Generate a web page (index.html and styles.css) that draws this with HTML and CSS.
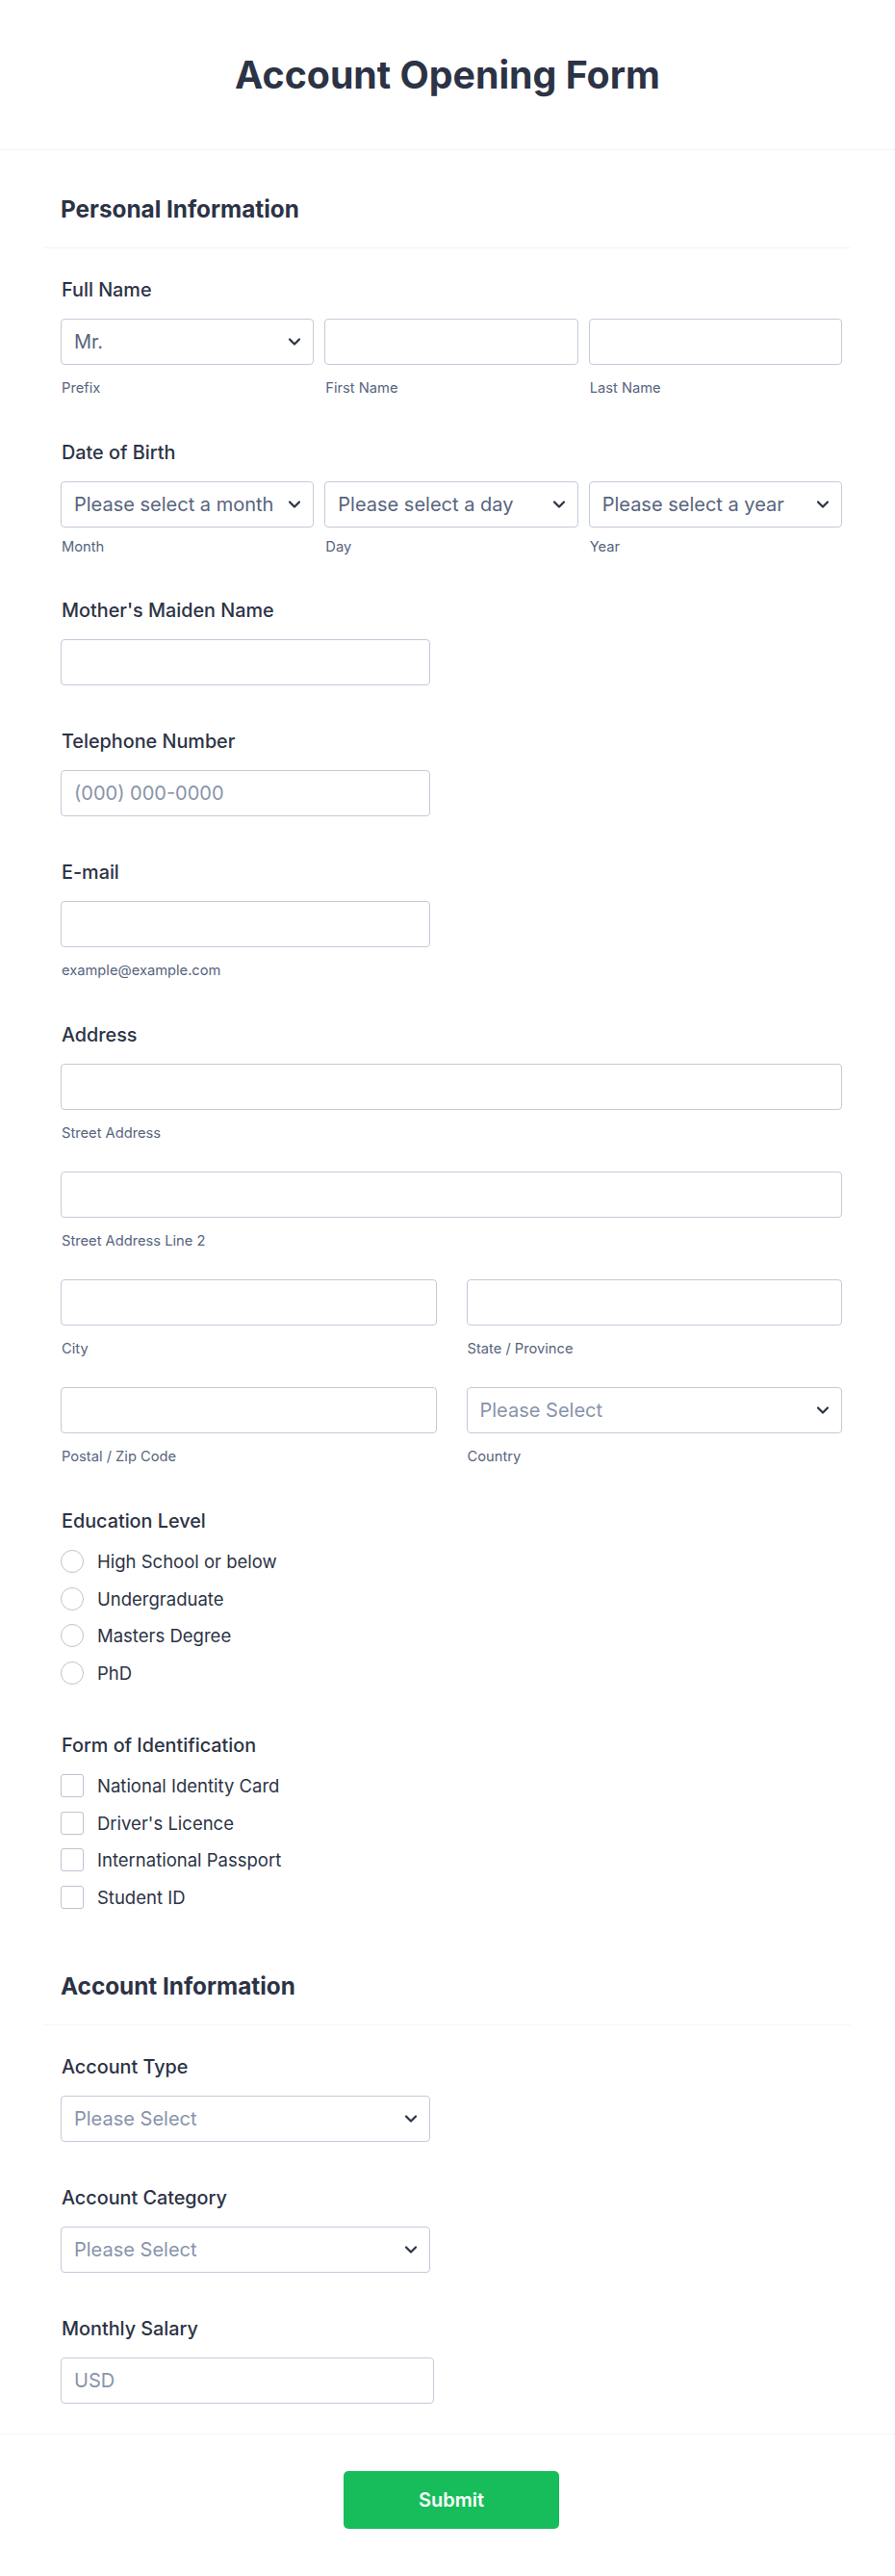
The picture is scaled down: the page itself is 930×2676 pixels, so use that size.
FILE: index.html
```html
<!DOCTYPE html>
<html lang="en">
<head>
<meta charset="utf-8">
<title>Account Opening Form</title>
<link rel="stylesheet" href="styles.css">
</head>
<body>
<header class="header">
  <h1 class="title">Account Opening Form</h1>
</header>

<section class="section">
  <div class="section-head"><h2 class="section-title">Personal Information</h2></div>
  <div class="list">
    <div class="field">
      <div class="label">Full Name</div>
      <div class="cols3">
        <div class="col">
          <div class="box select"><span class="val">Mr.</span><svg class="chev" viewBox="0 0 12 8"><path d="M1 1.5 L6 6.5 L11 1.5"/></svg></div>
          <div class="sub">Prefix</div>
        </div>
        <div class="col">
          <div class="box"></div>
          <div class="sub">First Name</div>
        </div>
        <div class="col">
          <div class="box"></div>
          <div class="sub">Last Name</div>
        </div>
      </div>
    </div>

    <div class="field field-dob">
      <div class="label">Date of Birth</div>
      <div class="cols3">
        <div class="col">
          <div class="box select"><span class="val">Please select a month</span><svg class="chev" viewBox="0 0 12 8"><path d="M1 1.5 L6 6.5 L11 1.5"/></svg></div>
          <div class="sub">Month</div>
        </div>
        <div class="col">
          <div class="box select"><span class="val">Please select a day</span><svg class="chev" viewBox="0 0 12 8"><path d="M1 1.5 L6 6.5 L11 1.5"/></svg></div>
          <div class="sub">Day</div>
        </div>
        <div class="col">
          <div class="box select"><span class="val">Please select a year</span><svg class="chev" viewBox="0 0 12 8"><path d="M1 1.5 L6 6.5 L11 1.5"/></svg></div>
          <div class="sub">Year</div>
        </div>
      </div>
    </div>

    <div class="field">
      <div class="label">Mother's Maiden Name</div>
      <div class="box short"></div>
    </div>

    <div class="field">
      <div class="label">Telephone Number</div>
      <div class="box short"><span class="ph">(000) 000-0000</span></div>
    </div>

    <div class="field">
      <div class="label">E-mail</div>
      <div class="box short"></div>
      <div class="sub">example@example.com</div>
    </div>

    <div class="field">
      <div class="label">Address</div>
      <div class="addr">
        <div class="row1">
          <div class="box"></div>
          <div class="sub">Street Address</div>
        </div>
        <div class="row1">
          <div class="box"></div>
          <div class="sub">Street Address Line 2</div>
        </div>
        <div class="cols2">
          <div class="col">
            <div class="box"></div>
            <div class="sub">City</div>
          </div>
          <div class="col">
            <div class="box"></div>
            <div class="sub">State / Province</div>
          </div>
        </div>
        <div class="cols2">
          <div class="col">
            <div class="box"></div>
            <div class="sub">Postal / Zip Code</div>
          </div>
          <div class="col">
            <div class="box select"><span class="ph">Please Select</span><svg class="chev" viewBox="0 0 12 8"><path d="M1 1.5 L6 6.5 L11 1.5"/></svg></div>
            <div class="sub">Country</div>
          </div>
        </div>
      </div>
    </div>

    <div class="field field-opts">
      <div class="label label-opt">Education Level</div>
      <div class="options">
        <div class="opt"><span class="radio"></span><span class="opt-text">High School or below</span></div>
        <div class="opt"><span class="radio"></span><span class="opt-text">Undergraduate</span></div>
        <div class="opt"><span class="radio"></span><span class="opt-text">Masters Degree</span></div>
        <div class="opt"><span class="radio"></span><span class="opt-text">PhD</span></div>
      </div>
    </div>

    <div class="field field-opts">
      <div class="label label-opt">Form of Identification</div>
      <div class="options">
        <div class="opt"><span class="check"></span><span class="opt-text">National Identity Card</span></div>
        <div class="opt"><span class="check"></span><span class="opt-text">Driver's Licence</span></div>
        <div class="opt"><span class="check"></span><span class="opt-text">International Passport</span></div>
        <div class="opt"><span class="check"></span><span class="opt-text">Student ID</span></div>
      </div>
    </div>
  </div>
</section>

<section class="section">
  <div class="section-head section-head-next"><h2 class="section-title">Account Information</h2></div>
  <div class="list">
    <div class="field">
      <div class="label">Account Type</div>
      <div class="box select short"><span class="ph">Please Select</span><svg class="chev" viewBox="0 0 12 8"><path d="M1 1.5 L6 6.5 L11 1.5"/></svg></div>
    </div>
    <div class="field">
      <div class="label">Account Category</div>
      <div class="box select short"><span class="ph">Please Select</span><svg class="chev" viewBox="0 0 12 8"><path d="M1 1.5 L6 6.5 L11 1.5"/></svg></div>
    </div>
    <div class="field">
      <div class="label">Monthly Salary</div>
      <div class="box salary"><span class="ph">USD</span></div>
    </div>
  </div>
</section>

<footer class="footer">
  <button class="submit" type="button">Submit</button>
</footer>
</body>
</html>
```

FILE: styles.css
```css
* { box-sizing: border-box; }

body {
  margin: 0;
  background: #ffffff;
  color: #2c3345;
  font-family: Inter, "Noto Sans", "Liberation Sans", sans-serif;
}

.header {
  height: 156px;
  border-bottom: 1px solid #f3f3fe;
  display: flex;
  align-items: center;
  justify-content: center;
}

.title {
  margin: 0;
  font-size: 39.3px;
  line-height: 48px;
  font-weight: 700;
  color: #2c3345;
}

.section {
  margin: 0 46px 0 45px;
}

.section-head {
  padding: 46px 18px 25px;
  border-bottom: 1px solid #f3f3fe;
}

.section-head-next {
  padding-top: 29px;
}

.section-title {
  margin: 0;
  font-size: 24.3px;
  line-height: 30px;
  font-weight: 700;
  color: #2c3345;
}

.list {
  padding: 8px 0;
}

.field {
  padding: 23px 9px 23px 18px;
}

.field-dob {
  padding-bottom: 22px;
}

.field-dob .sub {
  margin-top: 11px;
}

.field-opts {
  padding-bottom: 21px;
}

.label {
  padding-left: 1px;
  font-size: 19.8px;
  line-height: 24px;
  font-weight: 500;
  color: #2c3345;
  margin-bottom: 18px;
}

.label-opt {
  margin-bottom: 11px;
}

.box {
  height: 48px;
  border: 1px solid #c3cad8;
  border-radius: 4px;
  background: #fff;
  display: flex;
  align-items: center;
  padding: 0 13px;
  font-size: 20px;
  color: #57647e;
}

.select {
  justify-content: space-between;
}

.short {
  width: 384px;
}

.salary {
  width: 388px;
}

.val {
  color: #57647e;
  white-space: nowrap;
}

.ph {
  color: #8894ab;
  white-space: nowrap;
}

.chev {
  width: 12px;
  height: 8px;
  flex: none;
  margin-left: 8px;
}

.chev path {
  fill: none;
  stroke: #2c3345;
  stroke-width: 2.2;
  stroke-linecap: round;
  stroke-linejoin: round;
}

.sub {
  margin-top: 15px;
  padding-left: 1px;
  font-size: 14.7px;
  line-height: 18px;
  color: #57647e;
}

.cols3 {
  display: grid;
  grid-template-columns: 1fr 1fr 1fr;
  column-gap: 11px;
}

.cols2 {
  display: grid;
  grid-template-columns: 1fr 1fr;
  column-gap: 31px;
}

.addr {
  display: flex;
  flex-direction: column;
  gap: 31px;
}

.options {
  display: flex;
  flex-direction: column;
}

.opt {
  height: 38.5px;
  display: flex;
  align-items: center;
}

.radio {
  width: 24px;
  height: 24px;
  border: 1.5px solid #bcc3d0;
  border-radius: 50%;
  flex: none;
}

.check {
  width: 24px;
  height: 24px;
  border: 1.5px solid #bcc3d0;
  border-radius: 3px;
  flex: none;
}

.opt-text {
  margin-left: 14px;
  font-size: 18.5px;
  color: #2c3345;
}

.footer {
  border-top: 1px solid #f3f3fe;
  padding: 38px 55px 49px 63px;
  display: flex;
  justify-content: center;
}

.submit {
  width: 224px;
  height: 60px;
  border: none;
  border-radius: 5px;
  background: #18bd5b;
  color: #ffffff;
  font-family: Inter, "Noto Sans", "Liberation Sans", sans-serif;
  font-size: 20px;
  font-weight: 600;
}
```
